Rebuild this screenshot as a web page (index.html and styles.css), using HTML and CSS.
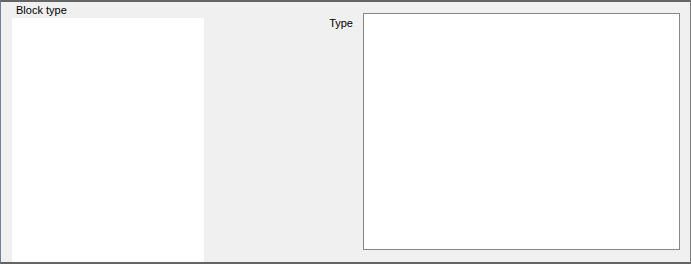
FILE: index.html
```html
<!DOCTYPE html>
<html>
<head>
<meta charset="utf-8">
<link rel="stylesheet" href="styles.css">
</head>
<body>
<div class="frame">
  <div class="left">
    <div class="left-label">Block type</div>
    <div class="list"></div>
  </div>
  <div class="right">
    <div class="type-label">Type</div>
    <div class="type-box"></div>
  </div>
</div>
</body>
</html>
```
FILE: styles.css
```css
html, body {
  margin: 0;
  padding: 0;
  background: #f0f0f0;
}
.frame {
  width: 691px;
  height: 264px;
  box-sizing: border-box;
  border-top: 2px solid #666666;
  border-left: 1px solid #72819a;
  border-right: 1px solid #7c7c7c;
  border-bottom: 2px solid #646464;
  background: #f0f0f0;
  display: flex;
  justify-content: space-between;
  font-family: "Liberation Sans", Arial, sans-serif;
  font-size: 11px;
  color: #000;
}
.left {
  display: flex;
  flex-direction: column;
  margin-left: 11px;
  width: 192px;
}
.left-label {
  height: 16px;
  line-height: 16px;
  padding-left: 4px;
}
.list {
  flex: 1;
  background: #ffffff;
}
.right {
  display: flex;
  align-items: flex-start;
  padding-top: 11px;
  margin-right: 10px;
}
.type-label {
  margin-top: 3px;
  margin-right: 10px;
  line-height: 14px;
}
.type-box {
  width: 317px;
  height: 237px;
  box-sizing: border-box;
  border: 1px solid #828790;
  background: #ffffff;
}
```
